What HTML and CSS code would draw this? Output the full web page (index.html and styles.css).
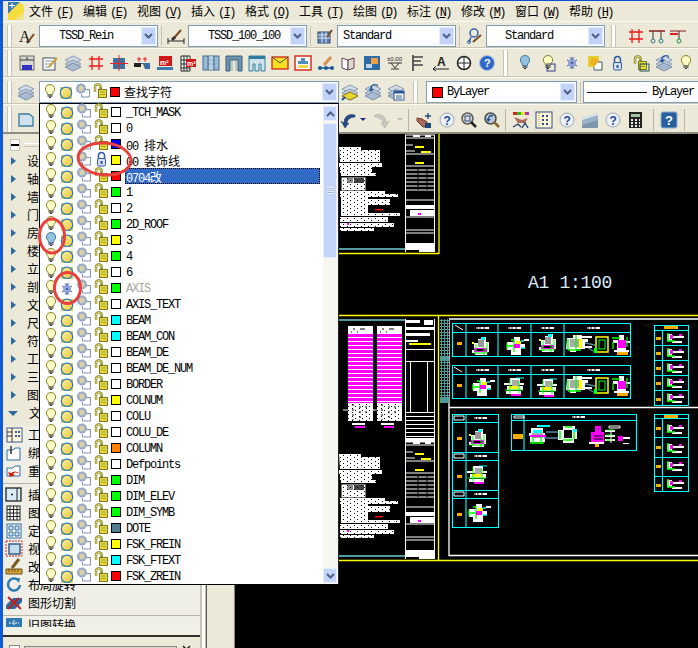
FILE: index.html
```html
<!DOCTYPE html>
<html lang="zh-CN">
<head>
<meta charset="utf-8">
<title>CAD</title>
<link rel="stylesheet" href="styles.css">
</head>
<body>
<svg class="defs" width="0" height="0" aria-hidden="true">
<defs>
<linearGradient id="gy" x1="0" y1="0" x2="1" y2="1"><stop offset="0" stop-color="#fbf09a"/><stop offset="1" stop-color="#ecc83c"/></linearGradient>
<pattern id="noise" width="7" height="4" patternUnits="userSpaceOnUse"><rect width="1" height="1" fill="#000"/><rect x="4" y="2" width="1" height="1" fill="#000"/></pattern>
<pattern id="stripe" width="4" height="4" patternUnits="userSpaceOnUse"><rect width="4" height="4" fill="#f0f"/><rect y="3" width="4" height="1" fill="#fff"/></pattern>
<pattern id="hatch" width="3" height="3" patternUnits="userSpaceOnUse"><rect width="3" height="3" fill="#000"/><rect width="1" height="3" fill="#4f9a9a"/><rect y="2" width="3" height="1" fill="#4f9a9a"/></pattern>

<g id="bulb"><path d="M7 .5a4.5 4.5 0 0 1 3 8l-.6 2H4.6L4 8.500a4.500 4.500 0 0 1 3-8z" fill="#fffbc4" stroke="#85852c"/><rect x="4.500" y="10.500" width="5" height="2.500" fill="#7c7c74"/><rect x="6" y="13" width="2" height="1" fill="#333"/></g>
<g id="bulboff"><path d="M7 .5a4.500 4.500 0 0 1 3 8l-.6 2H4.600L4 8.500a4.500 4.500 0 0 1 3-8z" fill="#92c4e2" stroke="#4d7896"/><rect x="4.500" y="10.500" width="5" height="2.500" fill="#6d7c88"/><rect x="6" y="13" width="2" height="1" fill="#333"/></g>
<g id="sun"><rect x="17" y="3" width="12" height="12" fill="#d5cd72"/><circle cx="23" cy="8.800" r="5.700" fill="url(#gy)" stroke="#2a78b8" stroke-width="1.200"/></g>
<g id="snow"><g fill="none" stroke="#3f55a8"><path d="M23 3v12M18 6l10 6M28 6l-10 6"/><circle cx="23" cy="9" r="3" stroke="#8fa2dc" stroke-width="2"/><path d="M21 3.500l2 2 2-2M21 14.500l2-2 2 2"/></g></g>
<g id="gear"><path d="M43 5.500h3.500v7.500h-8v-3" fill="none" stroke="#7d93b5"/><circle cx="38" cy="4.500" r="4.800" fill="#a8b6cc"/><circle cx="38" cy="4.500" r="3.800" fill="#d8d4a8" stroke="#8ea4c8" stroke-width="2.400" stroke-dasharray="2 .8"/></g>
<g id="lock"><path d="M52 8V3.200a2.800 2.800 0 0 1 5.600 0V5" fill="none" stroke="#84821e" stroke-width="2.400"/><path d="M52 8V3.200a2.800 2.800 0 0 1 5.600 0" fill="none" stroke="#f4ec90" stroke-width=".9"/><rect x="55.500" y="5.500" width="8" height="8" fill="#e6da3e" stroke="#7c7a1c"/><path d="M57 8h5M57 10.500h5" stroke="#a8a024"/></g>
<g id="locked"><path d="M54.500 7V3.500a3 3 0 0 1 6 0V7" fill="none" stroke="#2e58a4" stroke-width="1.500"/><rect x="53.500" y="6.500" width="8" height="7.500" rx="1.500" fill="#d7e2f6" stroke="#2e58a4"/><rect x="56.500" y="9" width="2" height="3" fill="#2e58a4"/></g>
<g id="lset"><use href="#bulb"/><use href="#sun"/><use href="#gear"/><use href="#lock"/></g>

<g id="chev"><path d="M1 1l3.500 3.500L8 1" fill="none" stroke="#4d6185" stroke-width="2"/></g>
<g id="a-brush"><text x="0" y="14" class="svg-a">A</text><path d="M9 14l6-8" stroke="#7a4a20" stroke-width="2"/><path d="M8 15l2-2" stroke="#333" stroke-width="2"/></g>
<g id="dim-brush"><path d="M0 13h16M0 10v6M16 10v6" stroke="#222"/><path d="M6 10l7-8" stroke="#7a4a20" stroke-width="2"/><path d="M4 12l3-3" stroke="#333" stroke-width="3"/></g>
<g id="tbl-brush"><rect x="1" y="4" width="12" height="11" fill="#5d7fb2" stroke="#2c4a78"/><path d="M1 7h12M1 10h12M5 4v11M9 4v11" stroke="#dfe8f6"/><path d="M10 9l5-7" stroke="#7a4a20" stroke-width="2"/></g>
<g id="ml-brush"><circle cx="8" cy="5" r="4" fill="none" stroke="#2f62a8" stroke-width="1.500"/><path d="M5 9l-2 5" stroke="#2f62a8" stroke-width="1.500"/><circle cx="3" cy="14" r="1.500" fill="none" stroke="#2f62a8"/><path d="M7 14l8-7" stroke="#7a4a20" stroke-width="2"/></g>
<g id="redgrid"><path d="M4 1v14M11 1v14M1 4h14M1 11h14" stroke="#f01818" stroke-width="1.300"/></g>
<g id="axis2"><path d="M0 3h16" stroke="#8a1c1c" stroke-width="1.500"/><path d="M4 3v8M12 3v8" stroke="#333"/><circle cx="4" cy="13" r="2" fill="none" stroke="#2a7a8a"/><circle cx="12" cy="13" r="2" fill="none" stroke="#2a7a8a"/></g>
<g id="axis3"><path d="M0 3h16" stroke="#8a1c1c"/><path d="M0 6h8" stroke="#e02020" stroke-width="2"/><path d="M9 3v8" stroke="#333"/><circle cx="9" cy="13" r="2" fill="none" stroke="#1e8a4a"/></g>
<g id="t-col"><rect x="1" y="1" width="14" height="14" fill="#d8d8d0" stroke="#6a6a6a"/><path d="M1 5h14" stroke="#333"/><path d="M8 2v3" stroke="#333"/><rect x="3" y="10" width="10" height="5" fill="#3030c0"/><path d="M5 12.500h.1M10 12.500h.1" stroke="#fff" stroke-width="2"/></g>
<g id="t-note"><rect x="1" y="3" width="12" height="12" fill="#fff" stroke="#456"/><path d="M3 6h8M3 9h6M3 12h5" stroke="#8090a0"/><path d="M7 12l8-9" stroke="#c8a030" stroke-width="2"/></g>
<g id="layers"><path d="M8 1l8 4-8 4-8-4z" fill="#d2dbe6" stroke="#8b9cb4"/><path d="M8 5l8 4-8 4-8-4z" fill="#bccadb" stroke="#8b9cb4"/><path d="M8 8l8 4-8 4-8-4z" fill="#a9bbd1" stroke="#7e90aa"/></g>
<g id="layers-y"><use href="#layers"/><path d="M8 8l8 4-8 4-8-4z" fill="#e8d630" stroke="#8a801a"/><path d="M0 16l3-3" stroke="#1e4c90" stroke-width="2"/></g>
<g id="layers-b"><use href="#layers"/><path d="M13 1A5 5 0 0 0 5 5l-2-.5L6 8l3-3-2-.5A3 3 0 0 1 13 4z" fill="#2a5a9a"/></g>
<g id="layers-w"><use href="#layers"/><rect x="6" y="7" width="10" height="9" fill="#fff" stroke="#2a5a9a"/><rect x="6" y="7" width="10" height="2.500" fill="#2a5a9a"/><path d="M8 12h6M8 14h6" stroke="#2a5a9a"/></g>
<g id="t-cross"><rect x="2" y="3" width="12" height="11" fill="#3f709f"/><path d="M-1 8.500h18M8 0v16" stroke="#f02020"/></g>
<g id="t-slab"><path d="M0 9h9l2 5h5V8H0z" fill="#3a6ea0"/><path d="M0 8h7v4H0z" fill="#222"/><path d="M5 2v5M11 2v5M3 4h4M9 4h4" stroke="#f02020"/></g>
<g id="t-m2"><rect x="2" y="1" width="13" height="10" fill="#d01818"/><text x="3" y="10" class="svg-m">m²</text><rect y="12" width="16" height="3" fill="#3a7ab0"/></g>
<g id="t-tm2"><path d="M1 1h9v15H1z" fill="#fff" stroke="#222"/><path d="M1 5h9M1 9h9M1 13h9M4 1v15M7 1v15" stroke="#222"/><rect x="6" y="4" width="10" height="8" fill="#d01818"/><text x="7" y="11" class="svg-m">m²</text></g>
<g id="t-pan"><rect x="0" y="1" width="16" height="14" fill="#9cbad2" stroke="#3d6e96"/><path d="M5 1v14M11 1v14M5 5h6M5 9h6" stroke="#3d6e96"/><rect x="6" y="1" width="4" height="14" fill="#c8dae8" opacity=".7"/></g>
<g id="t-door"><path d="M0 16V1h16v15h-4V5H4v11z" fill="#6e93b0" stroke="#3b5f7c"/><path d="M6 5v11M10 5v11" stroke="#8aa" /></g>
<g id="t-frame"><path d="M0 1h16v15h-4V9H10v7H6V9H4v7H0z" fill="#cfe2ee" stroke="#2f7ca0"/><path d="M0 1h16v3H0z" fill="#2f7ca0"/></g>
<g id="t-mail"><rect x="0" y="2" width="16" height="12" fill="#f4e020" stroke="#d02020" stroke-width="1.300"/><path d="M0 2l8 6 8-6" fill="none" stroke="#556" /></g>
<g id="t-stamp"><rect x="0" y="1" width="16" height="14" fill="#fff" stroke="#d83020" stroke-width="1.500"/><path d="M6 3h4v3h3v3H3V6h3z" fill="#4f8ac0"/><rect x="3" y="10" width="10" height="3" fill="#f0d840"/></g>
<g id="t-pen"><path d="M2 13h12" stroke="#3a7ab0" stroke-width="2"/><circle cx="2" cy="13" r="2" fill="#1e5a90"/><circle cx="8" cy="13" r="2" fill="#1e5a90"/><circle cx="14" cy="13" r="2" fill="#1e5a90"/><path d="M6 10l7-8" stroke="#d89050" stroke-width="3"/></g>
<g id="t-book"><path d="M1 3l6 2v10l-6-2z" fill="#fff" stroke="#645"/><path d="M7 5l6-2v10l-6 2z" fill="#e0d8d0" stroke="#645"/></g>
<g id="t-panel"><rect x="0" y="1" width="16" height="14" fill="#2d6ba8"/><rect x="7" y="3" width="7" height="6" fill="#f0a040"/><rect x="2" y="9" width="6" height="4" fill="#bcd4ec"/></g>
<g id="t-level"><text x="0" y="6" class="svg-s">±0.00</text><path d="M1 8h14M4 8l4 5 4-5M4 14h8" fill="none" stroke="#333"/></g>
<g id="t-comb"><path d="M3 0v16" stroke="#333" stroke-width="1.500"/><path d="M3 2h10M3 6h8M3 10h10" stroke="#444" stroke-width="1.500"/></g>
<g id="t-text"><text x="4" y="11" class="svg-t">A</text><path d="M0 14h16M3 11l-3 3 3 2" fill="none" stroke="#222"/></g>
<g id="t-circ"><circle cx="8" cy="8" r="6.500" fill="#fff" stroke="#222" stroke-width="1.500"/><path d="M8 1v14M1 8h14" stroke="#222"/></g>
<g id="t-help"><circle cx="8" cy="8" r="7.500" fill="#2e68c8" stroke="#a9c0e6"/><text x="5" y="12" class="svg-q">?</text></g>
<g id="t-b-lamp"><use href="#bulboff"/></g>
<g id="t-y-lamp"><use href="#bulb"/><rect x="6" y="9" width="8" height="7" fill="none" stroke="#303c88"/></g>
<g id="t-snow"><g transform="translate(-15 -1)"><use href="#snow"/></g></g>
<g id="t-sun"><rect x="1" y="1" width="11" height="11" fill="#e0d030"/><circle cx="7" cy="7" r="4" fill="#f0b020"/><path d="M11 7h4v8H7v-3" fill="#fff" stroke="#456"/></g>
<g id="t-lock"><g transform="translate(-50 1)"><use href="#locked"/></g></g>
<g id="t-open"><g transform="translate(-50 1)"><use href="#lock"/></g><rect x="7" y="9" width="9" height="7" fill="none" stroke="#1d4f58"/></g>
<g id="undo"><path d="M15 3C8 1 4 5 4 11l-3-2 4 7 4-5-2 .5C7 8 10 5 15 5z" fill="#254a86" stroke="#1a3462" stroke-width=".5"/></g>
<g id="redo"><path d="M1 3c7-2 11 2 11 8l3-2-4 7-4-5 2 .5C9 8 6 5 1 5z" fill="#c9c9c2" stroke="#a0a09a" stroke-width=".5"/></g>
<g id="t-hand"><path d="M1 6l5 1 5 3v5H7L1 9z" fill="#b06a5c" stroke="#6a3a30"/><rect x="9" y="11" width="6" height="5" fill="#1e4878"/><path d="M12 1v6M9 4h6" stroke="#1e4878" stroke-width="1.300"/></g>
<g id="t-q"><circle cx="8" cy="8" r="7" fill="#edf1f6" stroke="#98a8bc"/><text x="4.500" y="13" class="svg-qb">?</text></g>
<g id="t-zoom"><circle cx="6.500" cy="6.500" r="5.500" fill="#d8dcd8" stroke="#5a5a56" stroke-width="1.500"/><rect x="4" y="4" width="5" height="5" fill="none" stroke="#2a4a88"/><path d="M10 10l5 5" stroke="#222" stroke-width="2.500"/></g>
<g id="t-zoom2"><circle cx="6.500" cy="6.500" r="5.500" fill="#b8c8dc" stroke="#4a4a46" stroke-width="1.500"/><path d="M9 3C6 2 4 4 4 7l-2-1 2 4 3-3H5c0-2 2-3 4-2.500z" fill="#1e4a8a"/><path d="M10 10l5 5" stroke="#8a6a2a" stroke-width="2.500"/></g>
<g id="t-paint"><rect x="0" y="0" width="4" height="3" fill="#e02020"/><rect x="4" y="0" width="4" height="3" fill="#20c020"/><rect x="8" y="0" width="4" height="3" fill="#f0e020"/><rect x="12" y="0" width="4" height="3" fill="#b030c0"/><path d="M1 5l8 3 6-2-3 5H5z" fill="#b06a5c"/><path d="M0 15l5-3 3 3M9 16l3-5 3 5" fill="none" stroke="#1e3a6a" stroke-width="1.300"/></g>
<g id="t-pad"><rect x="0" y="0" width="16" height="16" fill="#fff8d8" stroke="#2a4a88"/><path d="M3 1v14" stroke="#a08a20" stroke-dasharray="1 1"/><path d="M6 3h2v2H6zM10 3h2v2h-2zM6 7h2v2H6zM10 7h2v2h-2zM6 11h2v2H6zM10 11h2v2h-2z" fill="#2a4a88"/></g>
<g id="t-pipe"><path d="M0 6l16-5v7L0 15z" fill="#9ab2c8"/><path d="M0 6l16-5v2L0 8z" fill="#dfe8ef"/><path d="M0 13l16-5v8H0z" fill="#7e96ac"/></g>
<g id="t-calc"><rect x="1" y="0" width="13" height="16" fill="#222"/><rect x="3" y="2" width="9" height="3" fill="#9ec6a0"/><path d="M3 7h2v2H3zM7 7h2v2H7zM11 7h1v2h-1zM3 10h2v2H3zM7 10h2v2H7zM11 10h1v2h-1zM3 13h2v2H3zM7 13h2v2H7zM11 13h1v2h-1z" fill="#f0f0f0"/></g>
<g id="t-qbox"><rect x="0" y="0" width="16" height="16" rx="2" fill="#2a5f9e" stroke="#8fb0d6"/><text x="4" y="13" class="svg-qc">?</text></g>
<g id="t-doc"><path d="M1 2h10l4 3v9H1z" fill="#cfe2ee" stroke="#3a7ca0" stroke-width="1.300"/></g>

<g id="s-tbl"><rect x="1" y="1" width="15" height="14" fill="#fff8e0" stroke="#3a5a88"/><path d="M6 1v14M1 5h5M1 9h5" stroke="#333"/><path d="M9 4h2v2H9zM12 4h2v2h-2zM9 8h2v2H9zM12 8h2v2h-2z" fill="#3a5a88"/></g>
<g id="s-bind"><path d="M1 5h6l2-2h5v12H1z" fill="#fff" stroke="#2f6a9f"/><path d="M5 1v8" stroke="#333" stroke-width="1.500"/></g>
<g id="s-reload"><path d="M1 5h6l2-2h5v10H1z" fill="#fff" stroke="#2f6a9f"/><path d="M13 10a5 4 0 0 0-8 0l-3-1 2 5 5-2-2-1a3 3 0 0 1 5-.5z" fill="#d02010"/></g>
<g id="s-ins"><rect x="0" y="1" width="15" height="13" fill="#d8ecf6" stroke="#222" stroke-width="1.300"/><path d="M11 1v13" stroke="#222"/><path d="M5 7.500h2" stroke="#222" stroke-width="1.500"/></g>
<g id="s-grid"><rect x="1" y="1" width="13" height="14" fill="#fff" stroke="#222"/><path d="M1 4.500h13M1 8h13M1 11.500h13M4 1v14M7.500 1v14M11 1v14" stroke="#222"/></g>
<g id="s-four"><rect x="1" y="1" width="14" height="14" fill="#fff" stroke="#2f6a9f"/><path d="M3 3h4v4H3zM9 3h4v4H9zM3 9h4v4H3zM9 9h4v4H9z" fill="#cfe2ee" stroke="#2f6a9f"/></g>
<g id="s-view"><rect x="0" y="0" width="16" height="15" fill="none" stroke="#d02020" stroke-dasharray="2 1"/><rect x="3" y="3" width="11" height="10" fill="#c4dcec" stroke="#1e4a78" stroke-width="1.300"/></g>
<g id="s-scale"><path d="M0 10h16v5H0z" fill="#d8a840" stroke="#6a5010"/><path d="M3 10v3M6 10v3M9 10v3M12 10v3" stroke="#6a5010"/><path d="M6 9l7-9" stroke="#7a5a20" stroke-width="3"/></g>
<g id="s-rot"><path d="M12 3A6 6 0 1 0 14 8" fill="none" stroke="#2f7ab0" stroke-width="2.500"/><path d="M9 1l5 0-1 5z" fill="#2f7ab0"/></g>
<g id="s-cut"><path d="M0 14h9l7-7v-4H7L0 10z" fill="#2f6a9f"/><path d="M2 2l13 12M2 14L13 3" stroke="#c02020" stroke-width="2"/></g>
<g id="s-old"><rect x="0" y="0" width="16" height="14" fill="#2f7ab0"/><path d="M3 5h10M8 2v6" stroke="#fff" stroke-dasharray="2 1"/></g>

<g id="notes">
<path d="M339 147h22v3h19v12h-40zM339 163h43v4h-43zM340 167h32v6h-32zM341 173h35v3h-35zM340 191h45v3h-45zM340 194h58v3h-58zM341 197h27v16h-27zM368 199h22v6h-22zM341 213h59v3h-59zM340 217h48v5h-48zM340 223h54v4h-54zM340 228h34v3h-34z" fill="#fff"/>
<rect x="341.500" y="177.500" width="24" height="13" fill="#fff"/>
<rect x="347" y="178" width="6" height="5" fill="#8a8a8a"/><rect x="354" y="178" width="10" height="5" fill="#444"/>
<path d="M339 147h59v84h-59z" fill="url(#noise)"/>
<rect x="375" y="209" width="8" height="1.500" fill="#f01010"/><rect x="347" y="223" width="2" height="2" fill="#f0f"/>
</g>
<g id="rcol">
<path d="M405.500 135v117M434.500 135v117" stroke="#fff"/>
<path d="M405 135h30M405 138h30M405 145h8M405 151h10M405 154h30M405 166h30M405 170h30M405 174h30M405 178h30M405 182h30M405 186h30M405 190h30M405 200h30M405 217h30M405 230h30M405 233h30" stroke="#fff"/>
<path d="M413 135h7v2h-7zM425 135h6v2h-6zM405 205h30v4h-30zM410 210h25v6h-25zM405 243h30v7h-30zM419 250h15v2h-15z" fill="#fff"/>
<path d="M407 172h10M407 176h10M407 184h10M407 188h10M418 168v22M427 168v22" stroke="#000"/>
<path d="M415 146h9v2h-9zM421 151h10v2h-10zM415 162h9v2h-9z" fill="#ff0"/>
<rect x="418" y="213" width="3" height="2" fill="#f0f"/>
</g>
<g id="det1">
<path d="M3 7h4V3h3V1h5v5h3v10h-2v3H4v-2H1v-3h2z" fill="#fff"/><rect x="7" y="4" width="6" height="7" fill="#999"/><rect x="10" y="1" width="4" height="3" fill="#0ff"/><path d="M3 12h13v4H3z" fill="#f0f"/><path d="M5 13h9v2H5z" fill="#000"/><path d="M2 17h15M5 8v10M13 11v8M16 7v8" stroke="#0f0"/><rect x="1" y="6" width="2" height="2" fill="#ff0"/>
</g>
<g id="det2">
<path d="M1 6h7V1h6v7h5v4h-4v7H5v-5H1z" fill="#fff"/><path d="M18 3h5v2h-5z" fill="#fff"/><path d="M5 4h3v12M2 10h12M1 7v6" stroke="#0f0" stroke-width="1.300" fill="none"/><rect x="8" y="8" width="6" height="4" fill="#f0f"/><rect x="10" y="5" width="5" height="3" fill="#ff0"/><path d="M15 12h4M15 5h3" stroke="#0ff" stroke-width="1.500"/>
</g>
<g id="det3">
<path d="M0 6h20v2H0zM6 1h10v6H6zM3 9h16v4H3zM2 14h15v3H2z" fill="#fff"/><rect x="8" y="3" width="7" height="7" fill="#aaa"/><rect x="5" y="9" width="9" height="3" fill="#ff0"/><path d="M6 2v14M1 13h18M15 4v12" stroke="#0f0"/><rect x="7" y="17" width="10" height="2" fill="#f0f"/><path d="M12 1h8" stroke="#0ff"/>
</g>
<g id="det4">
<path d="M1 4h6V1h9v4h6v3h-3v7H10v3H4v-3H0z" fill="#fff"/><rect x="4" y="5" width="9" height="8" fill="#aaa"/><path d="M2 5v11M10 1v15M2 16h13" stroke="#0f0" stroke-width="1.300" fill="none"/><rect x="13" y="5" width="3" height="9" fill="#ff0"/><path d="M14 2h12v2H14zM18 12h8v2h-8z" fill="#fff"/><path d="M19 9l10 2M22 14l9 5" stroke="#4f8a9a" stroke-width="1.300"/>
<rect x="30" y="3" width="12" height="15" fill="none" stroke="#ff0" stroke-width="1.500"/><rect x="33" y="6" width="6" height="9" fill="none" stroke="#0f0"/><path d="M28 14h3v5h-3z" fill="#0f0"/>
<path d="M47 6h6V1h5v6h6v2h-4v7h3v2H48v-2h3V9h-4z" fill="#fff"/><rect x="52" y="6" width="8" height="8" fill="#f0f"/><path d="M46 4h8M47 8v7M61 3v10" stroke="#0f0" stroke-width="1.300"/><rect x="51" y="18" width="11" height="3" fill="#fa0"/>
</g>
<g id="det5">
<path d="M2 8h16v3H2zM4 3h12v5H4zM3 11h15v6H3z" fill="#fff"/><rect x="6" y="5" width="9" height="3" fill="#0ff"/><rect x="5" y="8" width="11" height="5" fill="#aaa"/><rect x="3" y="10" width="16" height="2" fill="#f0f"/><path d="M6 12v7M14 12v7M3 18h14" stroke="#0f0" stroke-width="1.300"/><path d="M10 0h13v2H10z" fill="#0ff"/>
<path d="M19 7h14M17 13h14" stroke="#4f8a9a" stroke-width="1.300"/>
<path d="M31 5h5V1h12v3h2v10h-3v4H36v-3h-5z" fill="#fff"/><rect x="37" y="5" width="8" height="8" fill="#000"/><path d="M33 6v8M38 2h7M36 15h10M47 4v10" stroke="#0f0" stroke-width="1.500"/><path d="M46 4h4v3h-4z" fill="#0ff"/>
<path d="M62 18h15" stroke="#fff" stroke-width="2"/><path d="M68 1h6v6h3v10H64V7h4z" fill="#f0f"/><path d="M67 11h9M67 14h9M71 4h1" stroke="#000"/><rect x="68" y="19" width="4" height="3" fill="#fa0"/>
<path d="M78 6h10M78 11h10M78 15h10" stroke="#fff" stroke-width="2"/><path d="M80 5h7M79 10h7M79 15h7" stroke="#0f0"/><path d="M82 1h11v2H82zM84 5v13" stroke="#fff"/>
<path d="M91 11h5v5h-5z" fill="#f0f"/><path d="M96 12h7v2h-7zM96 18h6v1h-6z" fill="#fff"/>
</g>
<g id="hd"><path d="M0 0h13v2H0z" fill="#fff"/><path d="M1 0v2M4 0v2M8 0v2" stroke="#000"/></g>
<g id="mag">
<rect x="0" y="0" width="25" height="95" fill="#fff"/>
<rect x="0" y="8" width="25" height="69" fill="url(#stripe)"/>
<path d="M5 3h2M12 3h5M3 6h1M9 6h1" stroke="#000"/>
<path d="M0 78h25v17H0z" fill="url(#noise)"/>
<path d="M5 78v16M12 80v12M18 80v10" stroke="#000" stroke-dasharray="2 3"/>
<rect x="4" y="97" width="13" height="2" fill="#fff"/><rect x="7" y="100" width="10" height="2" fill="#f0f"/>
</g>
<g id="mark"><rect width="5" height="3" fill="#fa0"/></g>
<g id="rdet"><path d="M2 2h5v7H2zM7 4h12v2H7zM7 9h10v2H7z" fill="#fff"/><path d="M3 1v9M3 9h7" stroke="#0f0" stroke-width="1.500"/><rect x="5" y="3" width="3" height="4" fill="#f0f"/><rect x="14" y="2" width="3" height="2" fill="#f0f"/></g>
</defs>
</svg>

<div class="app">
  <nav class="menubar">
    <svg class="appicon" viewBox="0 0 16 18"><path d="M0 0h12l4 4v14H0z" fill="#f4e38a"/><path d="M0 0h12L0 12z" fill="#3a7ab0"/><path d="M0 12L12 0l4 4v6L6 18H0z" fill="#f6dd3e"/><path d="M4 1v5M1 3.500h6" stroke="#fff"/></svg>
    <span class="menu">文件<i>(<u>F</u>)</i></span><span class="menu">编辑<i>(<u>E</u>)</i></span><span class="menu">视图<i>(<u>V</u>)</i></span><span class="menu">插入<i>(<u>I</u>)</i></span><span class="menu">格式<i>(<u>O</u>)</i></span><span class="menu">工具<i>(<u>T</u>)</i></span><span class="menu">绘图<i>(<u>D</u>)</i></span><span class="menu">标注<i>(<u>N</u>)</i></span><span class="menu">修改<i>(<u>M</u>)</i></span><span class="menu">窗口<i>(<u>W</u>)</i></span><span class="menu">帮助<i>(<u>H</u>)</i></span>
  </nav>

  <div class="tb tb1">
    <span class="grip"></span>
    <svg class="ti ml7"><use href="#a-brush"/></svg>
    <div class="combo style-combo ml4"><span class="ctext pl19">TSSD_Rein</span><span class="cbtn"><svg class="chev"><use href="#chev"/></svg></span></div>
    <span class="sep"></span>
    <svg class="ti ml6"><use href="#dim-brush"/></svg>
    <div class="combo style-combo ml4"><span class="ctext pl19">TSSD_100_100</span><span class="cbtn"><svg class="chev"><use href="#chev"/></svg></span></div>
    <span class="sep"></span>
    <svg class="ti ml6"><use href="#tbl-brush"/></svg>
    <div class="combo style-combo ml4"><span class="ctext pl5">Standard</span><span class="cbtn"><svg class="chev"><use href="#chev"/></svg></span></div>
    <span class="sep"></span>
    <svg class="ti ml6"><use href="#ml-brush"/></svg>
    <div class="combo style-combo ml4"><span class="ctext pl18">Standard</span><span class="cbtn"><svg class="chev"><use href="#chev"/></svg></span></div>
    <span class="grip ml6"></span>
    <svg class="ti ml12"><use href="#redgrid"/></svg>
    <svg class="ti ml5"><use href="#axis2"/></svg>
    <svg class="ti ml5"><use href="#axis3"/></svg>
  </div>

  <div class="tb tb2">
    <span class="grip"></span>
    <div class="iconrun ml7">
      <svg class="ti"><use href="#t-col"/></svg><svg class="ti"><use href="#t-note"/></svg><svg class="ti"><use href="#layers"/></svg><svg class="ti"><use href="#redgrid"/></svg><svg class="ti"><use href="#t-cross"/></svg><svg class="ti"><use href="#t-slab"/></svg><svg class="ti"><use href="#t-m2"/></svg><svg class="ti"><use href="#t-tm2"/></svg><svg class="ti"><use href="#t-pan"/></svg><svg class="ti"><use href="#t-door"/></svg><svg class="ti"><use href="#t-frame"/></svg><svg class="ti"><use href="#t-mail"/></svg><svg class="ti"><use href="#t-stamp"/></svg><svg class="ti"><use href="#t-pen"/></svg><svg class="ti"><use href="#t-book"/></svg><svg class="ti"><use href="#t-panel"/></svg><svg class="ti"><use href="#t-level"/></svg><svg class="ti"><use href="#t-comb"/></svg><svg class="ti"><use href="#t-text"/></svg><svg class="ti"><use href="#t-circ"/></svg><svg class="ti"><use href="#t-help"/></svg>
    </div>
    <span class="grip ml8"></span>
    <div class="iconrun ml10">
      <svg class="ti"><use href="#t-b-lamp"/></svg><svg class="ti"><use href="#t-y-lamp"/></svg><svg class="ti"><use href="#t-snow"/></svg><svg class="ti"><use href="#t-sun"/></svg><svg class="ti"><use href="#t-lock"/></svg><svg class="ti"><use href="#t-open"/></svg><svg class="ti"><use href="#layers-b"/></svg><svg class="ti"><use href="#bulb"/></svg>
    </div>
  </div>

  <div class="tb tb3">
    <span class="grip"></span>
    <svg class="ti ml6"><use href="#layers"/></svg>
    <div class="combo layer-combo ml5">
      <svg class="licons"><use href="#lset"/></svg>
      <span class="swatch red"></span>
      <span class="lname cjk">查找字符</span>
      <span class="cbtn"><svg class="chev"><use href="#chev"/></svg></span>
    </div>
    <div class="iconrun ml3">
      <svg class="ti"><use href="#layers-y"/></svg><svg class="ti"><use href="#layers-b"/></svg><svg class="ti"><use href="#layers-w"/></svg>
    </div>
    <span class="grip ml9"></span>
    <div class="combo color-combo ml8"><span class="swatch red plain"></span><span class="ctext">ByLayer</span><span class="cbtn"><svg class="chev"><use href="#chev"/></svg></span></div>
    <span class="sep"></span>
    <div class="combo line-combo ml2"><span class="lineprev"></span><span class="ctext">ByLayer</span></div>
  </div>

  <div class="tb tb4">
    <span class="grip"></span>
    <svg class="ti ml6"><use href="#t-doc"/></svg>
    <svg class="ti undo-pos"><use href="#undo"/></svg><span class="tri"></span>
    <svg class="ti ml8"><use href="#redo"/></svg><span class="tri off"></span>
    <span class="sep4"></span>
    <div class="iconrun small ml7"><svg class="ti"><use href="#t-hand"/></svg><svg class="ti"><use href="#t-q"/></svg><svg class="ti"><use href="#t-zoom"/></svg><svg class="ti"><use href="#t-zoom2"/></svg></div>
    <span class="sep4"></span>
    <div class="iconrun ml7"><svg class="ti"><use href="#t-paint"/></svg><svg class="ti"><use href="#t-pad"/></svg><svg class="ti"><use href="#t-q"/></svg><svg class="ti"><use href="#t-pipe"/></svg><svg class="ti"><use href="#t-q"/></svg><svg class="ti"><use href="#t-calc"/></svg></div>
    <span class="sep4 ml9"></span>
    <svg class="ti ml7"><use href="#t-qbox"/></svg>
    <span class="sep4 ml7"></span>
  </div>

  <main class="work">
    <aside class="side">
      <div class="side-head"><span class="minus"></span><span class="headline"></span></div>
      <ul class="side-list">
        <li class="sitem"><span class="tri-r"></span>设</li>
        <li class="sitem"><span class="tri-r"></span>轴</li>
        <li class="sitem"><span class="tri-r"></span>墙</li>
        <li class="sitem"><span class="tri-r"></span>门</li>
        <li class="sitem"><span class="tri-r"></span>房</li>
        <li class="sitem"><span class="tri-r"></span>楼</li>
        <li class="sitem"><span class="tri-r"></span>立</li>
        <li class="sitem"><span class="tri-r"></span>剖</li>
        <li class="sitem"><span class="tri-r"></span>文</li>
        <li class="sitem"><span class="tri-r"></span>尺</li>
        <li class="sitem"><span class="tri-r"></span>符</li>
        <li class="sitem"><span class="tri-r"></span>工</li>
        <li class="sitem"><span class="tri-r"></span>三</li>
        <li class="sitem"><span class="tri-r"></span>图</li>
        <li class="sitem"><span class="tri-d"></span>文</li>
      </ul>
      <ul class="side-tools">
        <li class="titem"><svg class="si"><use href="#s-tbl"/></svg>工</li>
        <li class="titem"><svg class="si"><use href="#s-bind"/></svg>绑</li>
        <li class="titem sect"><svg class="si"><use href="#s-reload"/></svg>重</li>
        <li class="titem"><svg class="si"><use href="#s-ins"/></svg>插</li>
        <li class="titem"><svg class="si"><use href="#s-grid"/></svg>图</li>
        <li class="titem"><svg class="si"><use href="#s-four"/></svg>定</li>
        <li class="titem"><svg class="si"><use href="#s-view"/></svg>视</li>
        <li class="titem"><svg class="si"><use href="#s-scale"/></svg>改</li>
        <li class="titem"><svg class="si"><use href="#s-rot"/></svg>布局旋转</li>
        <li class="titem sect"><svg class="si"><use href="#s-cut"/></svg>图形切割</li>
        <li class="titem clip"><svg class="si"><use href="#s-old"/></svg>旧图转换</li>
      </ul>
      <div class="side-band"></div>
      <div class="side-foot"><span class="fbox"></span><span class="fbar"></span><svg class="fx" viewBox="0 0 11 10"><path d="M2 1l7 7M9 1L2 8" stroke="#222" stroke-width="1.500"/></svg></div>
    </aside>
    <div class="gutter"><span class="grip gut"></span><span class="gfill"></span></div>
    <div class="canvas">
      <svg class="drawing" viewBox="235 134 463 514">
        <path d="M439 134v120M339 253.500h100M339 315.500h359M438.500 315v246M339 560.500h359" stroke="#ff0" stroke-width="1.300" fill="none"/>
        <rect x="339" y="248" width="66" height="2" fill="#4f9a9a"/>
        <rect x="339" y="319" width="66" height="2" fill="#4f9a9a"/>
        <rect x="339" y="555" width="66" height="2" fill="#4f9a9a"/>
        <path d="M449 319h249M449 319v236.500h249M449 407.500h249" stroke="#fff" stroke-width="1.300" fill="none"/>
        <rect x="440" y="319" width="9" height="84" fill="url(#hatch)"/>
        <rect x="440" y="356" width="9" height="5" fill="#4f9a9a"/><rect x="440" y="397" width="9" height="6" fill="#4f9a9a"/>

        <use href="#notes"/>
        <use href="#notes" y="307"/>
        <use href="#rcol"/>
        <use href="#rcol" y="307"/>
        <path d="M405.500 319v124M434.500 319v124" stroke="#fff"/>
        <path d="M406 320h14v3h-14zM424 320h9v5h-9zM406 327h28v3h-28zM406 333h24v3h-24zM406 340h12v2h-12zM406 349h28v1h-28zM406 361h28v1h-28zM406 412h28v1h-28zM406 416h28v1h-28zM406 420h28v1h-28zM406 424h28v1h-28zM406 428h28v1h-28zM406 432h28v1h-28zM406 436h28v1h-28zM406 438h28v4h-28z" fill="#fff"/>
        <path d="M409 343h22v2h-22z" fill="#ff0"/>
        <path d="M410.500 362v50M427.500 362v50" stroke="#fff"/>

        <use href="#mag" x="348" y="326"/>
        <use href="#mag" x="377" y="326"/>
        <path d="M343 410h5M373 410h4" stroke="#fff"/>

        <g fill="none" stroke="#0ff" stroke-width="1.100">
          <path d="M452.500 323.500h178v33h-178zM452.500 332.500h178M466 323v33M498 323v33M531 323v33M564 323v33"/>
          <path d="M452.500 365.500h178v33h-178zM452.500 374.500h178M466 365v33M498 365v33M531 365v33M564 365v33"/>
          <path d="M452.500 414.500h46v113h-46zM452.500 422.500h46M452.500 452.500h46M452.500 460.500h46M452.500 490.500h46M452.500 498.500h46M466 414v114"/>
          <path d="M511.500 414.500h125v36h-125zM511.500 420.500h125M524 414v36"/>
          <path d="M654.500 325.500h34v80h-34zM654.500 330.500h34M654.500 345.500h34M654.500 360.500h34M654.500 375.500h34M654.500 390.500h34M662.500 330v76"/>
          <path d="M654.500 414.500h34v77h-34zM654.500 418.500h34M654.500 437.500h34M654.500 457.500h34M654.500 476.500h34M662.500 418v74"/>
        </g>
        <use href="#hd" x="476" y="327"/><use href="#hd" x="508" y="327"/><use href="#hd" x="541" y="327"/><use href="#hd" x="587" y="327"/>
        <use href="#hd" x="476" y="369"/><use href="#hd" x="508" y="369"/><use href="#hd" x="541" y="369"/><use href="#hd" x="587" y="369"/>
        <use href="#hd" x="474" y="417"/><use href="#hd" x="474" y="455"/><use href="#hd" x="474" y="493"/><use href="#hd" x="572" y="416"/>
        <path d="M455 325l8 5M454 367l8 5M454 416h10v4h-10zM454 454h10v4h-10zM454 492h10v4h-10zM514 416h10v2h-10z" stroke="#fff" fill="none"/>
        <use href="#det1" x="471" y="336"/><use href="#det2" x="506" y="336"/><use href="#det1" x="538" y="333"/><use href="#det4" x="566" y="334"/>
        <use href="#det2" x="472" y="377"/><use href="#det3" x="504" y="377"/><use href="#det3" x="537" y="378"/><use href="#det4" x="566" y="375"/>
        <use href="#det1" x="468" y="428"/><use href="#det3" x="467" y="465"/><use href="#det2" x="468" y="503"/>
        <use href="#det5" x="527" y="425"/>
        <use href="#mark" x="457" y="342"/><use href="#mark" x="457" y="384"/><use href="#mark" x="457" y="437"/><use href="#mark" x="457" y="475"/><use href="#mark" x="457" y="513"/>
        <rect x="513" y="434" width="10" height="5" fill="#fa0"/>
        <rect x="664" y="326" width="14" height="3" fill="#fa0"/><rect x="664" y="415" width="14" height="3" fill="#fa0"/>
        <use href="#mark" x="656" y="337"/><use href="#mark" x="656" y="352"/><use href="#mark" x="656" y="367"/><use href="#mark" x="656" y="382"/><use href="#mark" x="656" y="398"/>
        <use href="#mark" x="656" y="427"/><use href="#mark" x="656" y="446"/><use href="#mark" x="656" y="465"/><use href="#mark" x="656" y="484"/>
        <use href="#rdet" x="665" y="332"/><use href="#rdet" x="665" y="347"/><use href="#rdet" x="665" y="362"/><use href="#rdet" x="665" y="377"/><use href="#rdet" x="665" y="392"/>
        <use href="#rdet" x="665" y="423"/><use href="#rdet" x="665" y="442"/><use href="#rdet" x="665" y="460"/><use href="#rdet" x="665" y="478"/>
      </svg>
      <div class="scale-label">A1 1:100</div>
    </div>
  </main>

  <div class="dropdown">
    <ul class="layer-list">
      <li class="lrow"><svg class="licons"><use href="#lset"/></svg><span class="swatch white"></span><span class="lname">_TCH_MASK</span></li>
      <li class="lrow"><svg class="licons"><use href="#lset"/></svg><span class="swatch white"></span><span class="lname">0</span></li>
      <li class="lrow"><svg class="licons"><use href="#lset"/></svg><span class="swatch blue"></span><span class="lname">00 <span class="cjk">排水</span></span></li>
      <li class="lrow"><svg class="licons"><use href="#bulb"/><use href="#sun"/><use href="#gear"/><use href="#locked"/></svg><span class="swatch yellow"></span><span class="lname">00 <span class="cjk">装饰线</span></span></li>
      <li class="lrow"><svg class="licons"><use href="#lset"/></svg><span class="swatch red"></span><span class="lname selected">0704<span class="cjk">改</span></span></li>
      <li class="lrow"><svg class="licons"><use href="#lset"/></svg><span class="swatch green"></span><span class="lname">1</span></li>
      <li class="lrow"><svg class="licons"><use href="#lset"/></svg><span class="swatch white"></span><span class="lname">2</span></li>
      <li class="lrow"><svg class="licons"><use href="#lset"/></svg><span class="swatch green"></span><span class="lname">2D_ROOF</span></li>
      <li class="lrow"><svg class="licons"><use href="#bulboff"/><use href="#sun"/><use href="#gear"/><use href="#lock"/></svg><span class="swatch yellow"></span><span class="lname">3</span></li>
      <li class="lrow"><svg class="licons"><use href="#lset"/></svg><span class="swatch green"></span><span class="lname">4</span></li>
      <li class="lrow"><svg class="licons"><use href="#lset"/></svg><span class="swatch white"></span><span class="lname">6</span></li>
      <li class="lrow"><svg class="licons"><use href="#bulb"/><use href="#snow"/><use href="#gear"/><use href="#lock"/></svg><span class="swatch green"></span><span class="lname frozen">AXIS</span></li>
      <li class="lrow"><svg class="licons"><use href="#lset"/></svg><span class="swatch white"></span><span class="lname">AXIS_TEXT</span></li>
      <li class="lrow"><svg class="licons"><use href="#lset"/></svg><span class="swatch cyan"></span><span class="lname">BEAM</span></li>
      <li class="lrow"><svg class="licons"><use href="#lset"/></svg><span class="swatch cyan"></span><span class="lname">BEAM_CON</span></li>
      <li class="lrow"><svg class="licons"><use href="#lset"/></svg><span class="swatch white"></span><span class="lname">BEAM_DE</span></li>
      <li class="lrow"><svg class="licons"><use href="#lset"/></svg><span class="swatch white"></span><span class="lname">BEAM_DE_NUM</span></li>
      <li class="lrow"><svg class="licons"><use href="#lset"/></svg><span class="swatch white"></span><span class="lname">BORDER</span></li>
      <li class="lrow"><svg class="licons"><use href="#lset"/></svg><span class="swatch yellow"></span><span class="lname">COLNUM</span></li>
      <li class="lrow"><svg class="licons"><use href="#lset"/></svg><span class="swatch white"></span><span class="lname">COLU</span></li>
      <li class="lrow"><svg class="licons"><use href="#lset"/></svg><span class="swatch white"></span><span class="lname">COLU_DE</span></li>
      <li class="lrow"><svg class="licons"><use href="#lset"/></svg><span class="swatch orange"></span><span class="lname">COLUMN</span></li>
      <li class="lrow"><svg class="licons"><use href="#lset"/></svg><span class="swatch white"></span><span class="lname">Defpoints</span></li>
      <li class="lrow"><svg class="licons"><use href="#lset"/></svg><span class="swatch green"></span><span class="lname">DIM</span></li>
      <li class="lrow"><svg class="licons"><use href="#lset"/></svg><span class="swatch green"></span><span class="lname">DIM_ELEV</span></li>
      <li class="lrow"><svg class="licons"><use href="#lset"/></svg><span class="swatch green"></span><span class="lname">DIM_SYMB</span></li>
      <li class="lrow"><svg class="licons"><use href="#lset"/></svg><span class="swatch slate"></span><span class="lname">DOTE</span></li>
      <li class="lrow"><svg class="licons"><use href="#lset"/></svg><span class="swatch yellow"></span><span class="lname">FSK_FREIN</span></li>
      <li class="lrow"><svg class="licons"><use href="#lset"/></svg><span class="swatch cyan"></span><span class="lname">FSK_FTEXT</span></li>
      <li class="lrow"><svg class="licons"><use href="#lset"/></svg><span class="swatch red"></span><span class="lname">FSK_ZREIN</span></li>
    </ul>
    <div class="vscroll">
      <span class="sbtn"><svg class="chev up"><use href="#chev"/></svg></span>
      <span class="thumb"><span class="thumbgrip"></span></span>
      <span class="sbtn end"><svg class="chev"><use href="#chev"/></svg></span>
    </div>
  </div>

  <svg class="marks" viewBox="0 0 698 648">
    <ellipse cx="104.500" cy="159" rx="26.500" ry="16" transform="rotate(5 104.500 159)"/>
    <ellipse cx="52" cy="236" rx="12.500" ry="17"/>
    <ellipse cx="67.500" cy="288" rx="13" ry="15.500"/>
  </svg>
</div>
</body>
</html>
```

FILE: styles.css
```css
* { box-sizing: border-box; }
html, body { margin: 0; padding: 0; }
body { background: #ece9d8; }
ul { list-style: none; margin: 0; padding: 0; }
.defs { position: absolute; }

.app {
  position: relative;
  width: 698px;
  height: 648px;
  overflow: hidden;
  display: flex;
  flex-direction: column;
  background: #ece9d8;
  border-left: 3px solid #0f5ad8;
  border-top: 1px solid #0a4fd0;
  font-family: "Liberation Mono", "Noto Sans CJK SC", monospace;
  font-size: 12px;
  letter-spacing: -1.2px;
  color: #000;
}

.cjk, .menu, .sitem, .titem { font-family: "Noto Sans CJK SC", sans-serif; letter-spacing: 0; }

/* menu bar */
.menubar {
  height: 20px;
  display: flex;
  align-items: center;
  padding-left: 5px;
  flex: none;
}
.appicon { width: 16px; height: 18px; margin-right: 5px; flex: none; }
.menu { width: 54px; flex: none; white-space: nowrap; line-height: 18px; }
.menu i {
  font: normal 12px "Liberation Mono", monospace;
  letter-spacing: -1.6px;
  margin-left: 3px;
}

/* toolbars */
.tb {
  display: flex;
  align-items: center;
  flex: none;
  padding-left: 4px;
  white-space: nowrap;
  border-top: 1px solid #fbfaf4;
  border-bottom: 1px solid #c9c6b4;
}
.tb1 { height: 27px; padding-top: 3px; }
.tb2 { height: 29px; padding-top: 1px; }
.tb3 { height: 27px; padding-top: 3px; }
.tb4 { height: 30px; padding-top: 2px; border-bottom: 2px solid #8f8c7c; }

.grip {
  flex: none;
  width: 5px;
  height: 100%;
  border-left: 1px solid #c8c5b4;
  border-right: 1px solid #c8c5b4;
  background: #fff;
}
.sep { flex: none; width: 1px; height: 20px; margin-left: 3px; background: #c8c5b4; }
.sep4 { flex: none; width: 1px; height: 22px; margin-left: 5px; background: #b8b5a4; }

.ti { flex: none; width: 16px; height: 16px; overflow: visible; }
.iconrun { display: flex; gap: 7px; flex: none; }
.iconrun.small { gap: 6.500px; }

.ml2 { margin-left: 2px; }
.ml3 { margin-left: 3px; }
.ml4 { margin-left: 4px; }
.ml5 { margin-left: 5px; }
.ml6 { margin-left: 6px; }
.ml7 { margin-left: 7px; }
.ml8 { margin-left: 8px; }
.ml9 { margin-left: 9px; }
.ml10 { margin-left: 10px; }
.ml12 { margin-left: 12px; }
.pl5 { padding-left: 5px; }
.pl18 { padding-left: 18px; }
.pl19 { padding-left: 19px; }

.undo-pos { margin-left: 306px; }
.tri { flex: none; width: 0; height: 0; margin-left: 4px; border: 3px solid transparent; border-top: 3px solid #1a2a80; border-bottom: 0; }
.tri.off { border-top-color: #b8b8b0; margin-left: 7px; }

/* combos */
.combo {
  flex: none;
  height: 22px;
  display: flex;
  align-items: center;
  position: relative;
  background: #fff;
  border: 1px solid #7f9db9;
  overflow: hidden;
}
.style-combo { width: 119px; }
.layer-combo { width: 300px; }
.color-combo { width: 151px; padding-left: 5px; }
.line-combo { width: 130px; padding-left: 3px; }
.ctext { flex: none; }
.cbtn {
  position: absolute;
  right: 1px;
  top: 1px;
  bottom: 1px;
  width: 15px;
  display: flex;
  align-items: center;
  justify-content: center;
  background: #c1d3fb;
  border: 1px solid #e3ebfd;
}
.chev { width: 9px; height: 6px; }
.chev.up { transform: scaleY(-1); }
.lineprev { flex: none; width: 60px; height: 1px; background: #000; margin-right: 5px; }

.layer-combo .licons { margin-left: 3px; }
.layer-combo .lname { flex: none; height: auto; padding: 0; line-height: 18px; font-size: 12px; }

/* main area */
.work { flex: 1; display: flex; min-height: 0; }
.side {
  width: 197px;
  flex: none;
  display: flex;
  flex-direction: column;
  background: #ece9d8;
}
.side-head { height: 18px; display: flex; align-items: center; padding-left: 7px; flex: none; }
.minus {
  width: 10px;
  height: 12px;
  margin-top: 3px;
  background: linear-gradient(#fff 0 4px, #000 4px 6px, #fff 6px);
  border: 1px solid #c8c5b4;
}
.headline { width: 16px; height: 4px; margin: 3px 0 0 4px; border-top: 1px solid #fff; border-bottom: 1px solid #c8c5b4; }

.side-list { flex: none; height: 274px; }
.sitem { height: 18px; display: flex; align-items: center; padding-left: 8px; line-height: 18px; }
.tri-r { width: 0; height: 0; margin-right: 11px; border-left: 5px solid #2f6a9f; border-top: 4.500px solid transparent; border-bottom: 4.500px solid transparent; }
.tri-d { width: 0; height: 0; margin: 0 11px 0 -3px; border-top: 5px solid #2f6a9f; border-left: 5px solid transparent; border-right: 5px solid transparent; }

.side-tools { flex: none; background: #efefe8; }
.titem { height: 18px; display: flex; align-items: center; padding-left: 3px; line-height: 18px; font-size: 12px; }
.si { flex: none; width: 16px; height: 16px; margin-right: 6px; overflow: visible; }
.sect { height: 22px; margin-bottom: 2px; padding-bottom: 4px; border-bottom: 1px solid #b8b5a4; }
.clip { height: 9px; line-height: 14px; overflow: hidden; align-items: flex-start; }
.clip .si { margin-top: 0; }
.side-band { flex: none; height: 10px; background: #f2f1e6; border-bottom: 2px solid #33332e; }
.side-foot { flex: 1; display: flex; align-items: flex-start; padding: 8px 0 0 6px; }
.fbox { width: 11px; height: 10px; background: #fff; border: 1px solid #888; }
.fbar { width: 153px; height: 4px; margin: 1px 0 0 4px; background: #d8d6c8; border: 1px solid #888; }
.fx { flex: none; width: 11px; height: 10px; margin-left: 4px; }

.gutter { width: 35px; flex: none; display: flex; background: #ece9d8; border-right: 1px solid #85857a; border-left: 1px solid #c8c5b4; }
.gut { height: 100%; }
.gfill { flex: 1; border-left: 1px solid #55554e; }

.canvas { flex: 1; background: #000; position: relative; overflow: hidden; }
.drawing { width: 463px; height: 514px; display: block; }
.scale-label {
  position: absolute;
  left: 293px;
  top: 138px;
  font: 18px/22px "Liberation Mono", monospace;
  letter-spacing: -.3px;
  color: #dcecff;
  white-space: nowrap;
}

/* layer dropdown */
.dropdown {
  position: absolute;
  left: 36px;
  top: 102px;
  width: 300px;
  height: 482px;
  display: flex;
  background: #fff;
  border: 1px solid #000;
  border-right-color: #222;
}
.layer-list { width: 283px; flex: none; }
.lrow { height: 16px; display: flex; padding-left: 4px; }
.licons { flex: none; width: 66px; height: 16px; overflow: visible; }
.swatch { flex: none; width: 10px; height: 10px; margin: 3px 0 0 1px; border: 1px solid #000; }
.swatch.plain { width: 11px; height: 11px; margin: 0 4px 0 0; }
.layer-combo .swatch { margin-top: 0; }
.lname { flex: 1; height: 16px; margin: 0 3px 0 4px; padding: 1px 0 0 1px; line-height: 16px; white-space: pre; }
.selected { background: #316ac5; color: #fff; outline: 1px dotted #000; outline-offset: -1px; }
.frozen { color: #a9a99f; }
.white { background: #fff; }
.blue { background: #0000f0; }
.yellow { background: #ff0; }
.red { background: #f00; }
.green { background: #0f0; }
.cyan { background: #0ff; }
.orange { background: #ff7f00; }
.slate { background: #4f8096; }

.vscroll {
  flex: 1;
  display: flex;
  flex-direction: column;
  background: #f7f6f0;
  padding: 2px 1px 1px 0;
  gap: 2px;
}
.sbtn {
  flex: none;
  height: 15px;
  display: flex;
  align-items: center;
  justify-content: center;
  background: #c4d5fb;
  border: 1px solid #e7eefd;
}
.thumb {
  flex: none;
  height: 135px;
  display: flex;
  align-items: center;
  justify-content: center;
  background: #c4d5fb;
  border: 1px solid #e7eefd;
}
.thumbgrip { width: 7px; height: 7px; background: repeating-linear-gradient(#eef3fe 0 1px, #9db6e8 1px 2px); }
.end { margin-top: auto; }

.marks {
  position: absolute;
  left: -3px;
  top: -1px;
  width: 698px;
  height: 648px;
  fill: none;
  stroke: #e8403c;
  stroke-width: 3;
  pointer-events: none;
}

/* text inside icons */
.svg-a { font: 16px "Liberation Serif", serif; letter-spacing: 0; fill: #111; }
.svg-m { font: bold 7px "Liberation Sans", sans-serif; letter-spacing: 0; fill: #fff; }
.svg-s { font: 6px "Liberation Sans", sans-serif; letter-spacing: 0; fill: #222; }
.svg-t { font: bold 12px "Liberation Sans", sans-serif; letter-spacing: 0; fill: #222; }
.svg-q { font: bold 11px "Liberation Sans", sans-serif; letter-spacing: 0; fill: #fff; }
.svg-qb { font: bold 12px "Liberation Sans", sans-serif; letter-spacing: 0; fill: #1e4a9a; }
.svg-qc { font: bold 13px "Liberation Sans", sans-serif; letter-spacing: 0; fill: #fff; }
```
